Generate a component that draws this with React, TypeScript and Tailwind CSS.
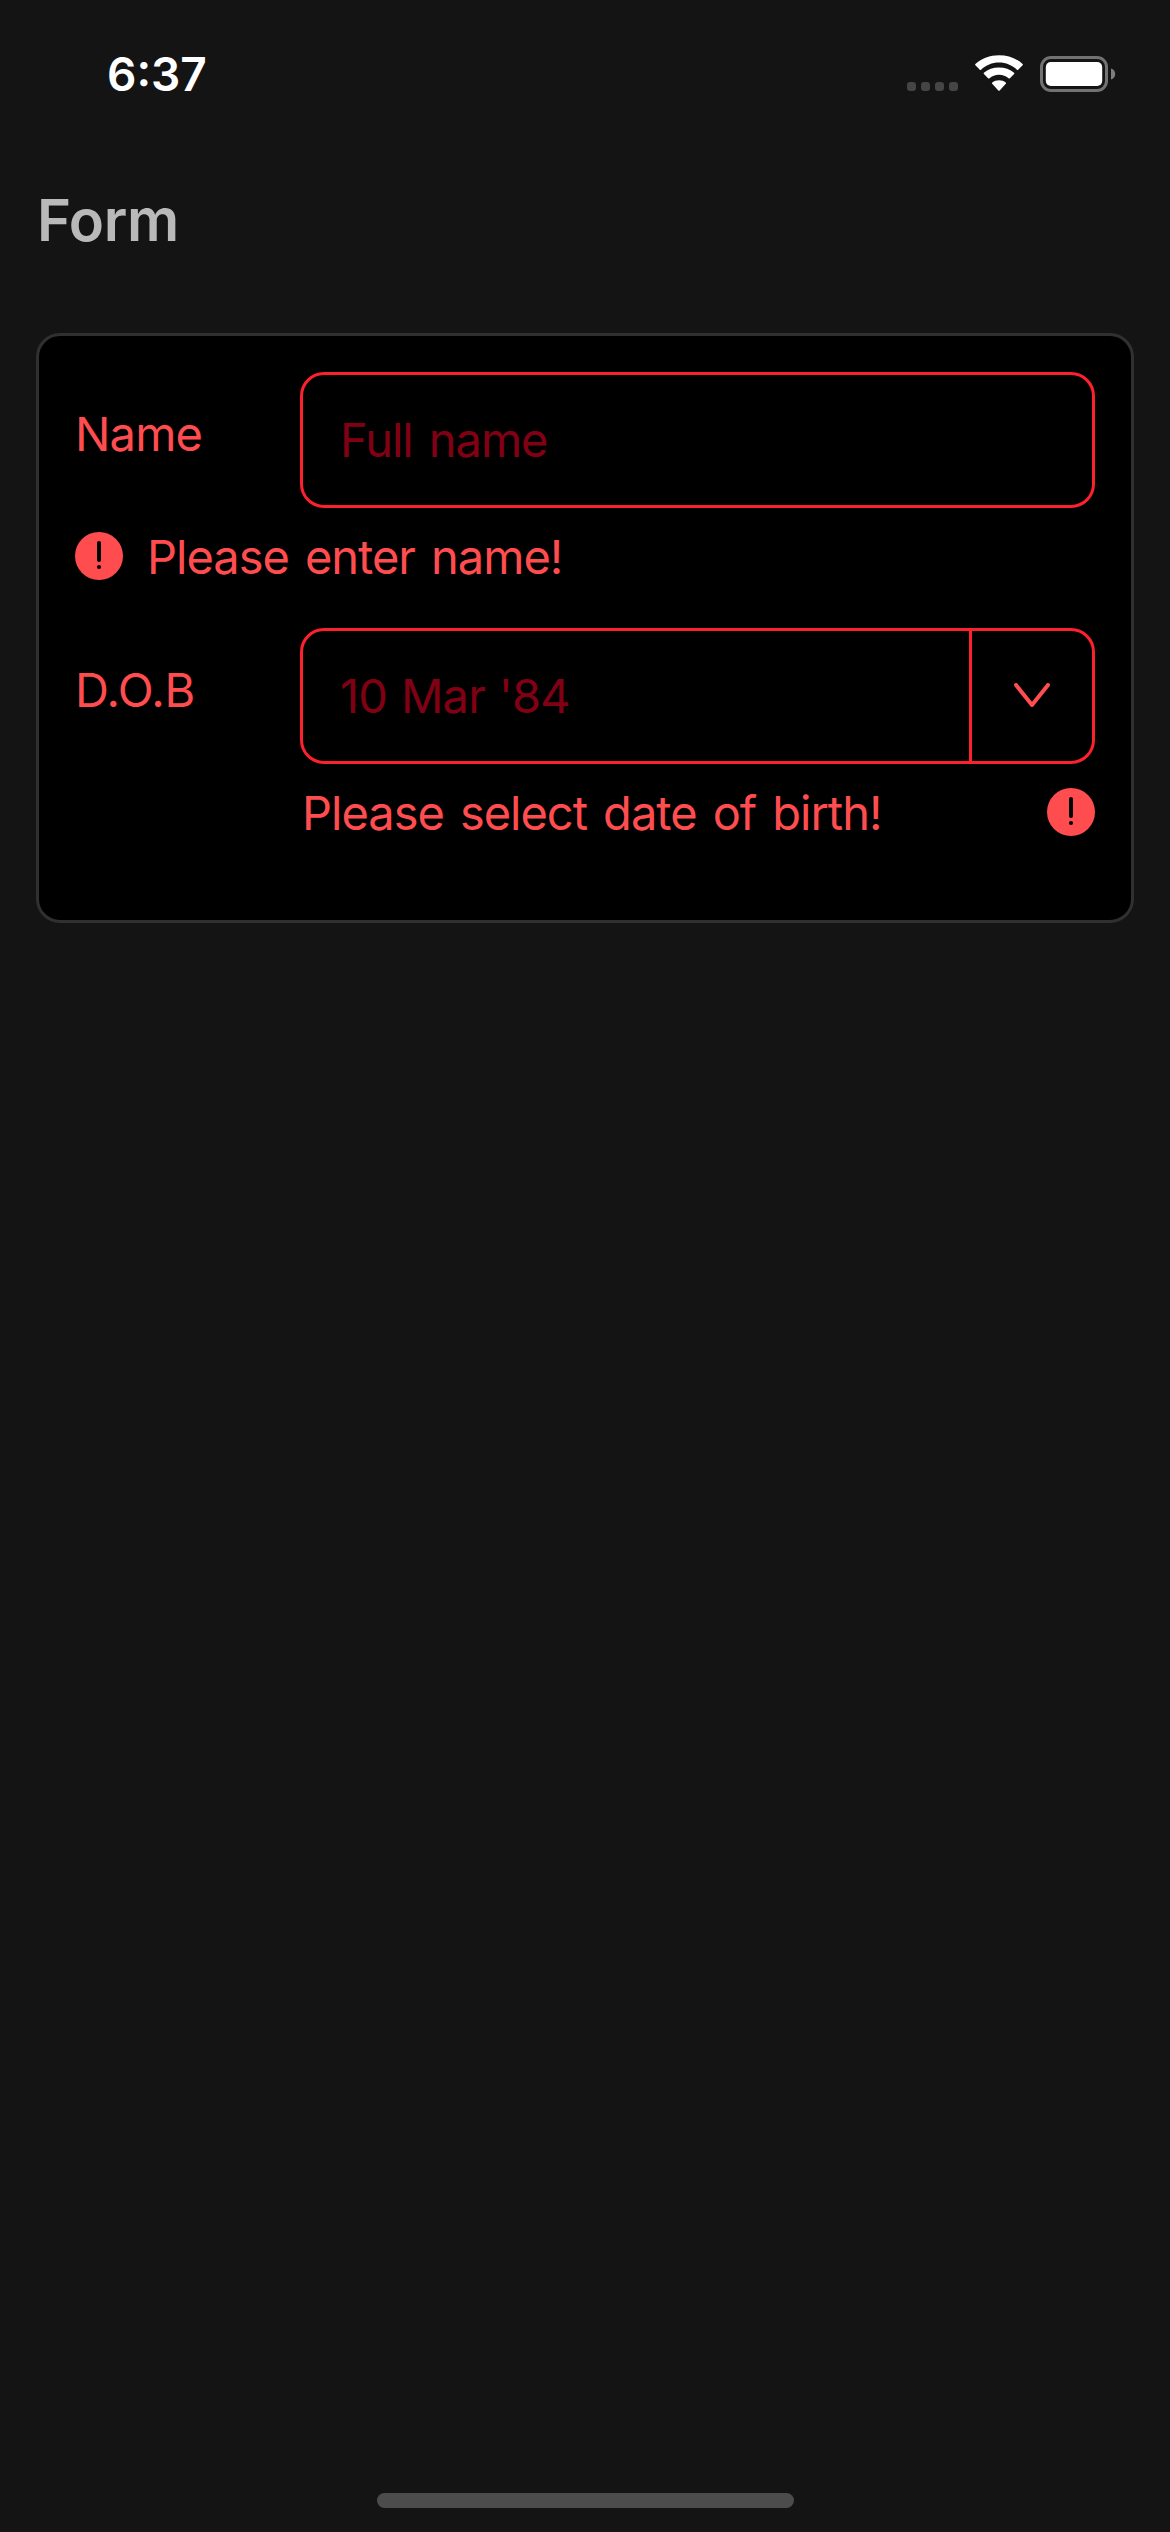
import type { ReactNode } from 'react';

function SignalDots() {
  return (
    <div className="flex gap-[5px]">
      {[0, 1, 2, 3].map((i) => (
        <span key={i} className="size-[9px] rounded-[3px] bg-[#454545]" />
      ))}
    </div>
  );
}

function WifiIcon() {
  return (
    <svg width="50" height="38" viewBox="0 0 50 38" fill="#fff">
      <path d="M25 7.6C31.9 7.6 38.2 10.3 42.9 14.7C43.3 15.1 43.8 15.1 44.2 14.7L48.6 10.3C49 9.9 49 9.3 48.6 8.9C42.3 3.2 34.1 0.2 25 0.2C15.9 0.2 7.7 3.2 1.4 8.9C1 9.3 1 9.9 1.4 10.3L5.8 14.7C6.2 15.1 6.7 15.1 7.1 14.7C11.8 10.3 18.1 7.6 25 7.6Z" />
      <path d="M25 19.8C28.7 19.8 32 21.1 34.5 23.3C34.9 23.7 35.5 23.7 35.9 23.3L40.1 19.1C40.5 18.7 40.5 18.1 40.1 17.7C36.1 14.1 30.8 12.4 25 12.4C19.2 12.4 13.9 14.1 9.9 17.7C9.5 18.1 9.5 18.7 9.9 19.1L14.1 23.3C14.5 23.7 15.1 23.7 15.5 23.3C18 21.1 21.3 19.8 25 19.8Z" />
      <path d="M31.8 28.8C32.2 28.4 32.2 27.8 31.7 27.4C29.9 25.9 27.6 25.2 25 25.2C22.4 25.2 20.1 25.9 18.3 27.4C17.8 27.8 17.8 28.4 18.2 28.8L24.3 35.5C24.7 35.9 25.3 35.9 25.7 35.5Z" />
    </svg>
  );
}

function BatteryIcon() {
  return (
    <svg width="76" height="36" viewBox="0 0 76 36">
      <rect x="1.5" y="1.5" width="65" height="33" rx="9.5" fill="none" stroke="#727272" strokeWidth="3" />
      <rect x="5.8" y="6" width="56.4" height="24" rx="5" fill="#fff" />
      <path d="M71 12.5C73.6 13.2 75.2 15.2 75.2 18C75.2 20.8 73.6 22.8 71 23.5Z" fill="#7d7d7d" />
    </svg>
  );
}

function ErrorIcon() {
  return (
    <svg width="48" height="48" viewBox="0 0 48 48" className="shrink-0">
      <circle cx="24" cy="24" r="24" fill="#ff4d4f" />
      <rect x="22" y="9" width="4" height="21" rx="2" fill="#000" />
      <circle cx="24" cy="35" r="2.1" fill="#000" />
    </svg>
  );
}

function ChevronDown() {
  return (
    <svg width="36" height="26" viewBox="0 0 36 26" fill="none">
      <path d="M2 2L18 22L34 2" stroke="#ff4d4f" strokeWidth="4" strokeLinecap="round" strokeLinejoin="round" />
    </svg>
  );
}

function FieldRow({ label, children }: { label: ReactNode; children: ReactNode }) {
  return (
    <div className="flex h-[136px]">
      <div className="w-[225px] pt-[33px]">{label}</div>
      <div className="flex flex-1 overflow-hidden rounded-[24px] border-[3px] border-[#fc212d]">{children}</div>
    </div>
  );
}

export default function App() {
  return (
    <div className="flex h-[2532px] w-[1170px] flex-col bg-[#141414] font-['Inter',sans-serif]">
      <header className="flex h-[185px] items-start justify-between pl-[107px] pr-[54px]">
        <span className="pt-[46px] text-[46px] leading-[56px] font-semibold text-white">6:37</span>
        <div className="flex pt-[56px]">
          <div className="mr-[16px] pt-[26px]">
            <SignalDots />
          </div>
          <div className="mr-[16px] -mt-px">
            <WifiIcon />
          </div>
          <BatteryIcon />
        </div>
      </header>

      <h1 className="ml-[37px] text-[58px] leading-[70px] font-semibold tracking-[-0.4px] text-[#b9b9b9]">Form</h1>

      <main className="mx-[36px] mt-[78px] h-[590px] rounded-[24px] border-[3px] border-[#303030] bg-black p-[36px] text-[47px] leading-[57px] tracking-[-1px] text-[#ff4d4f] [word-spacing:3.8px]">
        <FieldRow label={<span className="tracking-[-0.8px]">Name</span>}>
          <span className="pt-[36px] pl-[37px] text-[#820014]">Full name</span>
        </FieldRow>
        <div className="mt-[24px] mb-[48px] flex h-[48px]">
          <ErrorIcon />
          <span className="-mt-[4px] ml-[24px] whitespace-nowrap">Please enter name!</span>
        </div>

        <FieldRow label={<span className="tracking-[-0.3px]">D.O.B</span>}>
          <span className="flex-1 pt-[36px] pl-[37px] tracking-[-0.8px] text-[#820014] [word-spacing:1.3px]">10 Mar '84</span>
          <div className="flex w-[123px] items-center justify-center border-l-[3px] border-[#fc212d]">
            <ChevronDown />
          </div>
        </FieldRow>
        <div className="mt-[24px] flex h-[48px] justify-between pl-[227px]">
          <span className="-mt-[4px] whitespace-nowrap">Please select date of birth!</span>
          <ErrorIcon />
        </div>
      </main>

      <div className="mt-auto mb-[24px] h-[15px] w-[417px] self-center rounded-full bg-[#4c4c4c]" />
    </div>
  );
}
